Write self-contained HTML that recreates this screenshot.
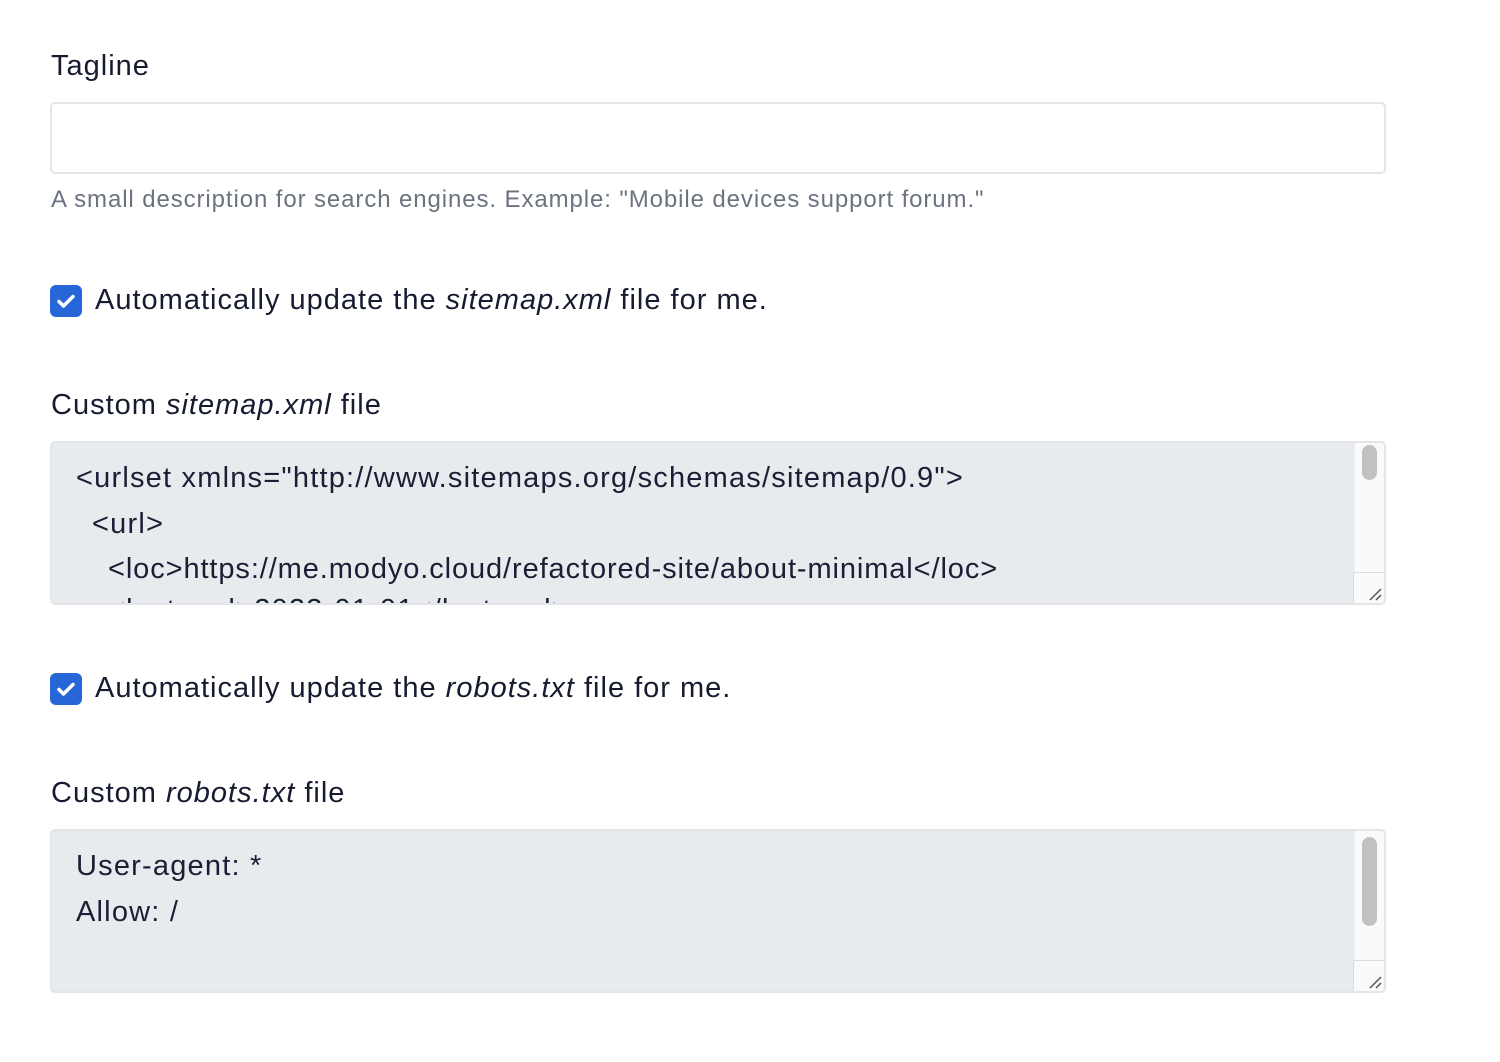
<!DOCTYPE html>
<html><head><meta charset="utf-8"><style>
body{margin:0;width:1500px;height:1062px;background:#fff;font-family:"Liberation Sans",sans-serif;color:#1a1f36;position:relative;overflow:hidden}
.a{position:absolute;white-space:nowrap}
.lbl{font-size:29px;letter-spacing:1px;color:#161b30}
.help{font-size:24px;letter-spacing:0.9px;color:#6b7280}
.input{position:absolute;left:50px;width:1332px;height:68px;top:102px;border:2px solid #e3e5e9;border-radius:5px;background:#fff}
.ta{position:absolute;left:50px;width:1332px;height:160px;border:2px solid #e3e5e9;border-radius:5px;background:#e8ebee;overflow:hidden}
.ta .t{position:absolute;left:24px;font-size:29px;letter-spacing:1.2px;line-height:45.5px;color:#1a1f36;white-space:pre}
.track{position:absolute;right:0;top:0;width:29px;height:130px;background:#fafafa;border-left:1px solid #eee}
.thumb{position:absolute;left:7px;width:15px;border-radius:8px;background:#c1c1c1}
.corner{position:absolute;right:0;bottom:0;width:30px;height:30px;background:#fafafa;border-left:1px solid #ddd;border-top:1px solid #ddd}
.cb{position:absolute;left:50px;width:32px;height:32px;border-radius:6px;background:#2766d6}
</style></head><body>
<div class="a lbl" style="left:51px;top:50px">Tagline</div>
<div class="input"></div>
<div class="a help" style="left:51px;top:186px">A small description for search engines. Example: "Mobile devices support forum."</div>

<div class="cb" style="top:285px"><svg width="32" height="32"><path d="M9 16.5l4.5 4.5L23 11.5" stroke="#fff" stroke-width="3.5" fill="none" stroke-linecap="round" stroke-linejoin="round"/></svg></div>
<div class="a lbl" style="left:95px;top:284px">Automatically update the <i>sitemap.xml</i> file for me.</div>

<div class="a lbl" style="left:51px;top:389px">Custom <i>sitemap.xml</i> file</div>
<div class="ta" style="top:441px">
<div class="t" style="top:13px"><div>&lt;urlset xmlns="http://www.sitemaps.org/schemas/sitemap/0.9"&gt;</div><div style="padding-left:16px">&lt;url&gt;</div><div style="padding-left:32px;letter-spacing:0.9px">&lt;loc&gt;https://me.modyo.cloud/refactored-site/about-minimal&lt;/loc&gt;</div><div style="padding-left:32px;margin-top:-5px">&lt;lastmod&gt;2023-01-01&lt;/lastmod&gt;</div></div>
<div class="track"><div class="thumb" style="top:2px;height:35px"></div></div>
<div class="corner"><svg width="30" height="30"><path d="M16 27l11-11M22 27l5-5" stroke="#555" stroke-width="1.5"/></svg></div>
</div>

<div class="cb" style="top:673px"><svg width="32" height="32"><path d="M9 16.5l4.5 4.5L23 11.5" stroke="#fff" stroke-width="3.5" fill="none" stroke-linecap="round" stroke-linejoin="round"/></svg></div>
<div class="a lbl" style="left:95px;top:672px">Automatically update the <i>robots.txt</i> file for me.</div>

<div class="a lbl" style="left:51px;top:777px">Custom <i>robots.txt</i> file</div>
<div class="ta" style="top:829px">
<div class="t" style="top:13px">User-agent: *
Allow: /</div>
<div class="track"><div class="thumb" style="top:6px;height:89px"></div></div>
<div class="corner"><svg width="30" height="30"><path d="M16 27l11-11M22 27l5-5" stroke="#555" stroke-width="1.5"/></svg></div>
</div>
</body></html>
